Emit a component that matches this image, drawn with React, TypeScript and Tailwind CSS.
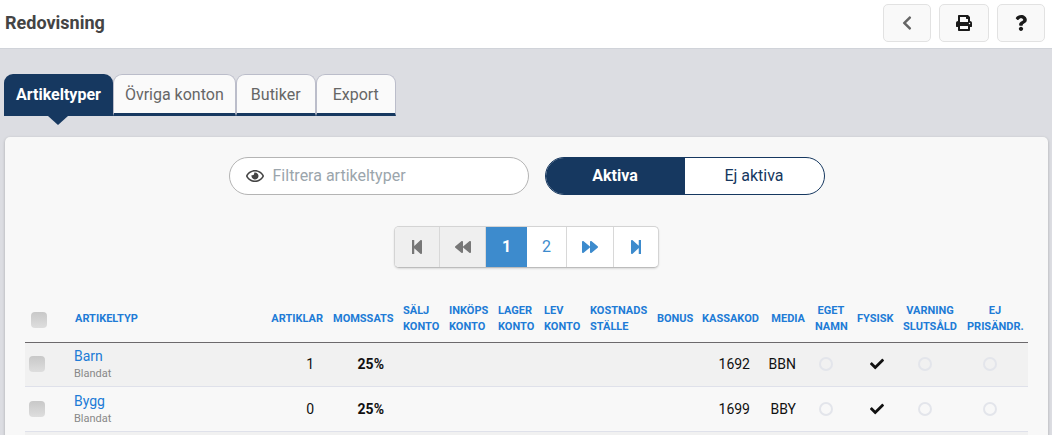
import { useState } from "react";
import {
  FaBackward,
  FaCheck,
  FaChevronLeft,
  FaForward,
  FaPrint,
  FaQuestion,
  FaRegEye,
  FaStepBackward,
  FaStepForward,
} from "react-icons/fa";

interface ArticleType {
  id: number;
  name: string;
  kind: string;
  articles: number;
  vat: string;
  code: string;
  media: string;
}

const rows: ArticleType[] = [
  { id: 1, name: "Barn", kind: "Blandat", articles: 1, vat: "25%", code: "1692", media: "BBN" },
  { id: 2, name: "Bygg", kind: "Blandat", articles: 0, vat: "25%", code: "1699", media: "BBY" },
];

const columns = [
  { lines: ["Artikeltyp"], width: "", align: "text-left" },
  { lines: ["Artiklar"], width: "w-[62px]", align: "text-right" },
  { lines: ["Momssats"], width: "w-[70px]", align: "text-center" },
  { lines: ["Sälj", "konto"], width: "w-[46px]", align: "text-left" },
  { lines: ["Inköps", "konto"], width: "w-[49px]", align: "text-left" },
  { lines: ["Lager", "konto"], width: "w-[46px]", align: "text-left" },
  { lines: ["Lev", "konto"], width: "w-[46px]", align: "text-left" },
  { lines: ["Kostnads", "ställe"], width: "w-[67px]", align: "text-left" },
  { lines: ["Bonus"], width: "w-[45px]", align: "text-left" },
  { lines: ["Kassakod"], width: "w-[67px]", align: "text-left" },
  { lines: ["Media"], width: "w-[46px]", align: "text-right" },
  { lines: ["Eget", "namn"], width: "w-[42px]", align: "text-center" },
  { lines: ["Fysisk"], width: "w-[46px]", align: "text-center" },
  { lines: ["Varning", "slutsåld"], width: "w-[64px]", align: "text-center" },
  { lines: ["Ej", "prisändr."], width: "w-[66px]", align: "text-center" },
];

const tabs = ["Artikeltyper", "Övriga konton", "Butiker", "Export"];

function CheckBox({ label }: { label: string }) {
  return (
    <input
      type="checkbox"
      aria-label={label}
      className="block size-4 appearance-none rounded bg-linear-to-b from-[#c8c8c8] to-[#dedede] checked:from-[#163860] checked:to-[#163860]"
    />
  );
}

function Ring() {
  return <span className="mx-auto block size-[14px] rounded-full border-2 border-[#e3e5eb]" />;
}

export default function App() {
  const [tab, setTab] = useState("Artikeltyper");
  const [active, setActive] = useState(true);
  const [page, setPage] = useState(1);
  const [filter, setFilter] = useState("");

  const toolButton =
    "flex h-[38px] w-12 items-center justify-center rounded-[5px] border border-[#e2e2e2] bg-[#f9f9f9] text-[#1a1a1a]";
  const pageButton = "flex h-full items-center justify-center border-r border-[#d8d8d8]";

  return (
    <div className="flex h-screen flex-col overflow-hidden bg-[#dcdde2] font-['Roboto',sans-serif] text-[#111]">
      <header className="flex h-[49px] shrink-0 items-center justify-between border-b border-[#d0d3d9] bg-white pr-[7px] pb-[2px] pl-[5px]">
        <h1 className="text-lg font-bold text-[#444]">Redovisning</h1>
        <div className="flex gap-2">
          <button aria-label="Tillbaka" className={toolButton}>
            <FaChevronLeft className="size-4 text-[#666]" />
          </button>
          <button aria-label="Skriv ut" className={toolButton + " min-w-[50px]"}>
            <FaPrint className="size-4" />
          </button>
          <button aria-label="Hjälp" className={toolButton}>
            <FaQuestion className="size-4" />
          </button>
        </div>
      </header>

      <nav className="flex shrink-0 px-1 pt-[25px]">
        {tabs.map((t) => (
          <button
            key={t}
            onClick={() => setTab(t)}
            className={
              t === tab
                ? "relative h-[42px] rounded-t-[9px] bg-[#163860] px-3 text-base font-bold text-white"
                : "h-[42px] min-w-20 rounded-t-[9px] border border-b-[3px] border-[#bbbdca] border-b-[#163860] bg-[#fafafa] px-[11px] pt-[2px] text-base text-[#666]"
            }
          >
            {t}
            {t === tab && (
              <svg viewBox="0 0 20 9" className="absolute top-full left-1/2 h-[9px] w-5 -translate-x-1/2">
                <path d="M0 0h20L10 9z" fill="#163860" />
              </svg>
            )}
          </button>
        ))}
      </nav>

      <main className="mx-1 mt-[21px] ml-[5px] grow rounded-t-[5px] bg-[#f8f8f8] px-5 pt-5 shadow-[0_1px_3px_rgba(0,0,0,0.25)]">
        <div className="flex justify-center gap-4">
          <label className="flex h-[38px] w-[300px] items-center gap-[9px] rounded-full border border-[#b4b4b4] bg-white px-4">
            <FaRegEye className="size-[18px] shrink-0 text-[#444]" />
            <input
              type="text"
              value={filter}
              onChange={(e) => setFilter(e.target.value)}
              placeholder="Filtrera artikeltyper"
              aria-label="Filtrera artikeltyper"
              className="w-full bg-transparent text-base outline-none placeholder:text-[#9ba5ac]"
            />
          </label>
          <div className="flex h-[38px] w-[280px] overflow-hidden rounded-full border border-[#163860] bg-white">
            <button
              onClick={() => setActive(true)}
              className={active ? "flex-1 bg-[#163860] font-bold text-white" : "flex-1 text-[#163860]"}
            >
              Aktiva
            </button>
            <button
              onClick={() => setActive(false)}
              className={active ? "flex-1 text-[#163860]" : "flex-1 bg-[#163860] font-bold text-white"}
            >
              Ej aktiva
            </button>
          </div>
        </div>

        <div className="mt-[31px] flex justify-center">
          <div className="flex h-[42px] overflow-hidden rounded-[5px] border border-[#d4d4d4] border-b-[#bcbcbc] bg-white text-base text-[#3d8bcd] shadow-[0_1px_2px_rgba(0,0,0,0.12)]">
            <button aria-label="Första sidan" className={pageButton + " w-[45px] bg-[#efefef] text-[#777]"}>
              <FaStepBackward className="size-4" />
            </button>
            <button aria-label="Föregående sida" className={pageButton + " w-[46px] bg-[#efefef] text-[#777]"}>
              <FaBackward className="size-4" />
            </button>
            {[1, 2].map((n) => (
              <button
                key={n}
                onClick={() => setPage(n)}
                className={
                  n === page
                    ? "flex w-[41px] items-center justify-center bg-[#3d8bcd] font-bold text-white"
                    : pageButton + " w-10"
                }
              >
                {n}
              </button>
            ))}
            <button aria-label="Nästa sida" className={pageButton + " w-[47px]"}>
              <FaForward className="size-4" />
            </button>
            <button aria-label="Sista sidan" className="flex w-11 items-center justify-center">
              <FaStepForward className="size-4" />
            </button>
          </div>
        </div>

        <table className="mt-[29px] w-full table-fixed border-collapse text-sm">
          <colgroup>
            <col className="w-[45px]" />
            {columns.map((c) => (
              <col key={c.lines.join(" ")} className={c.width} />
            ))}
          </colgroup>
          <thead>
            <tr className="h-[45px] border-b border-[#6c696c] text-[11px] leading-4 text-[#207bd6] uppercase">
              <th className="pt-[2px] pl-[6px]">
                <CheckBox label="Markera alla" />
              </th>
              {columns.map((c) => (
                <th key={c.lines.join(" ")} className={"px-[5px] font-bold whitespace-nowrap " + c.align}>
                  {c.lines.map((line) => (
                    <span key={line} className="block">
                      {line}
                    </span>
                  ))}
                </th>
              ))}
            </tr>
          </thead>
          <tbody>
            {rows.map((r) => (
              <tr key={r.id} className="h-11 border-b border-[#dfe1ea] odd:bg-[#f1f1f1] even:h-[45px]">
                <td className="pl-1">
                  <CheckBox label={r.name} />
                </td>
                <td className="pl-1">
                  <a href="#" className="block leading-5 text-[#207bd6]">
                    {r.name}
                  </a>
                  <span className="block text-[11px] leading-4 text-[#888]">{r.kind}</span>
                </td>
                <td className="pr-[14px] text-right">{r.articles}</td>
                <td className="pr-[14px] text-right font-bold">{r.vat}</td>
                <td />
                <td />
                <td />
                <td />
                <td />
                <td />
                <td className="pr-[14px] text-right">{r.code}</td>
                <td className="pr-[14px] text-right">{r.media}</td>
                <td className="pr-[10px]">
                  <Ring />
                </td>
                <td className="pl-1">
                  <FaCheck className="mx-auto size-[14px]" />
                </td>
                <td className="pr-[10px]">
                  <Ring />
                </td>
                <td className="pr-[10px]">
                  <Ring />
                </td>
              </tr>
            ))}
            <tr className="h-11 odd:bg-[#f1f1f1]">
              <td colSpan={16} />
            </tr>
          </tbody>
        </table>
      </main>
    </div>
  );
}
